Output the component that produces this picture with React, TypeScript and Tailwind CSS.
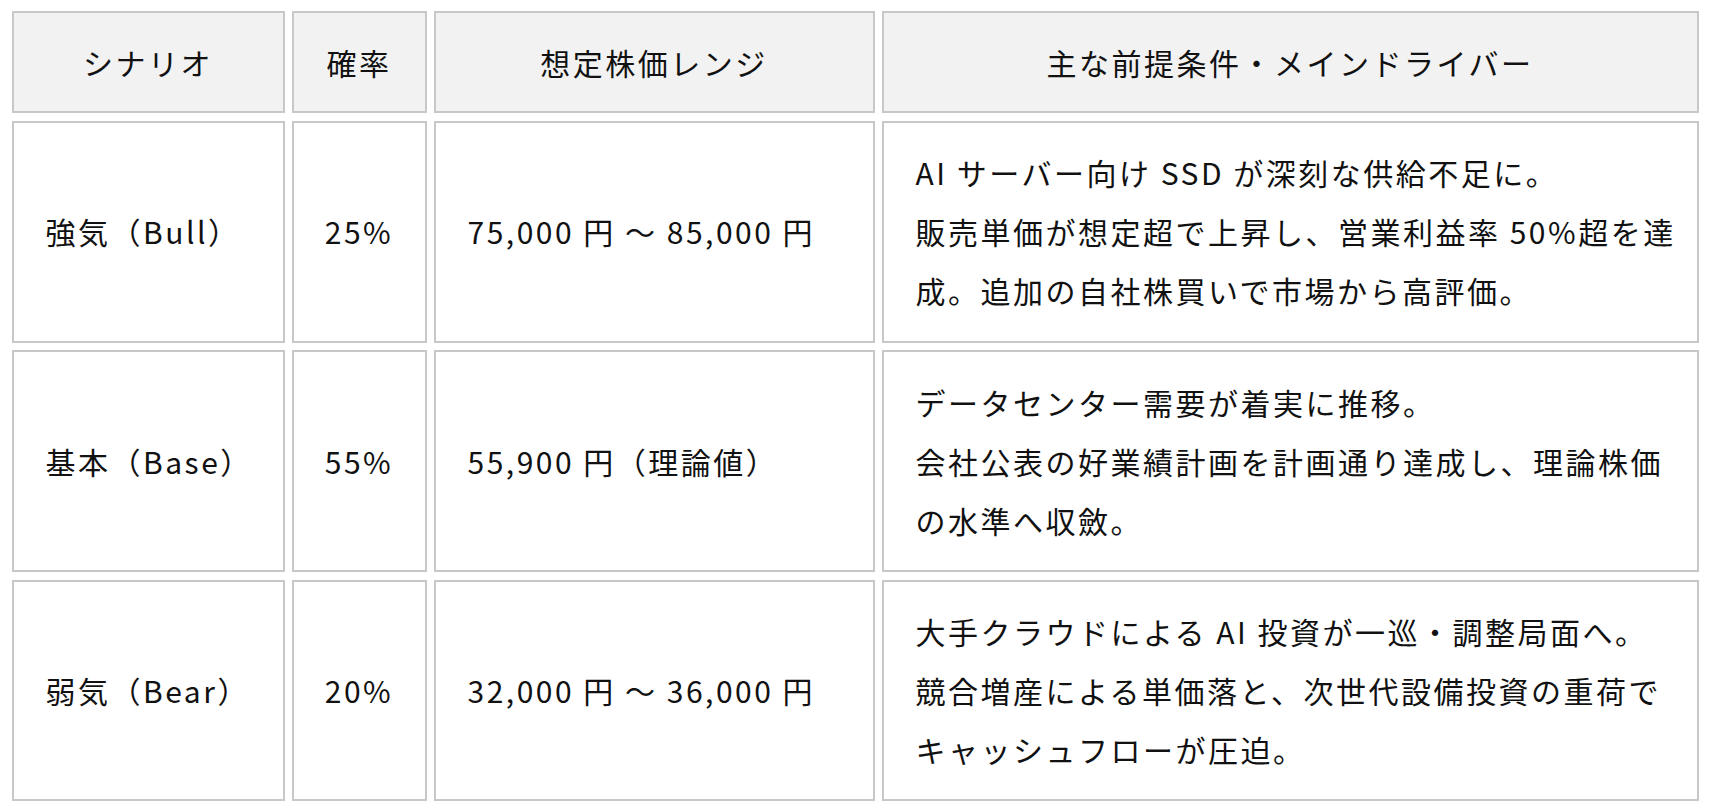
const header = ["シナリオ", "確率", "想定株価レンジ", "主な前提条件・メインドライバー"];

const rows = [
  {
    name: "強気（Bull）",
    prob: "25%",
    range: "75,000 円 ～ 85,000 円",
    notes: [
      "AI サーバー向け SSD が深刻な供給不足に。",
      "販売単価が想定超で上昇し、営業利益率 50%超を達",
      "成。追加の自社株買いで市場から高評価。",
    ],
  },
  {
    name: "基本（Base）",
    prob: "55%",
    range: "55,900 円（理論値）",
    notes: [
      "データセンター需要が着実に推移。",
      "会社公表の好業績計画を計画通り達成し、理論株価",
      "の水準へ収斂。",
    ],
  },
  {
    name: "弱気（Bear）",
    prob: "20%",
    range: "32,000 円 ～ 36,000 円",
    notes: [
      "大手クラウドによる AI 投資が一巡・調整局面へ。",
      "競合増産による単価落と、次世代設備投資の重荷で",
      "キャッシュフローが圧迫。",
    ],
  },
];

const cell = "border-2 border-[#c8c8c8] flex items-center text-[30px] tracking-[2.5px] text-[#111]";

export default function App() {
  return (
    <div
      className="min-h-screen bg-white pt-[11px] pl-[11.5px]"
      style={{ fontFamily: '"Noto Sans CJK JP", "Noto Sans", sans-serif' }}
    >
      <div className="grid grid-cols-[273px_135px_441px_817px] grid-rows-[102px_222px_222px_221px] gap-x-[7px] gap-y-[7.5px]">
        {header.map((h) => (
          <div key={h} className={`${cell} justify-center bg-[#f2f2f2]`}>
            {h}
          </div>
        ))}
        {rows.map((r) => (
          <div key={r.name} className="contents">
            <div className={`${cell} px-8`}>{r.name}</div>
            <div className={`${cell} justify-center`}>{r.prob}</div>
            <div className={`${cell} px-8`}>{r.range}</div>
            <div className={`${cell} px-8`}>
              <div className="leading-[59px]">
                {r.notes.map((n) => (
                  <span key={n} className="block whitespace-nowrap">
                    {n}
                  </span>
                ))}
              </div>
            </div>
          </div>
        ))}
      </div>
    </div>
  );
}
